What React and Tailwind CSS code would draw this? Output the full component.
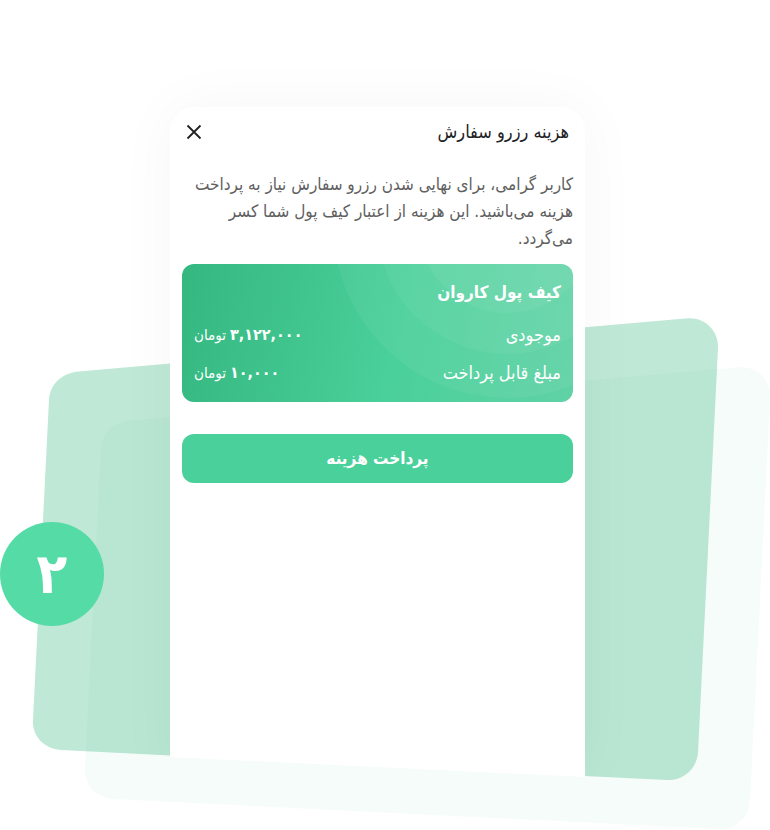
const amounts = [
  { label: 'موجودی', value: '۳,۱۲۲,۰۰۰' },
  { label: 'مبلغ قابل پرداخت', value: '۱۰,۰۰۰' },
];

const slab =
  'M79 371.6 L688 318.2 C705 317 719 331 718 348 L698 752 C697 769 683 781 667 780 L61 750 C44 749 32 736 33 720 L49 400 C50 384 62 373 79 371.6Z';

function Backdrop() {
  return (
    <svg className="absolute top-0 left-0 w-full" viewBox="0 0 770 830" aria-hidden="true">
      <path d={slab} fill="#bfe8d6" />
      <path d={slab} fill="#37c39b" fillOpacity="0.05" transform="translate(52 49)" />
    </svg>
  );
}

function WalletCard() {
  return (
    <section className="relative overflow-hidden rounded-xl bg-linear-[100deg] from-[#35b780] via-[#4ad09a] via-55% to-[#60d2a6] px-3 pt-3 pb-2.5 text-white">
      <svg className="absolute top-0 right-0 h-[138px] w-[391px]" viewBox="0 0 391 138" fill="#ffffff" fillOpacity="0.05" aria-hidden="true">
        <circle cx="325" cy="-40" r="174" />
        <circle cx="325" cy="-40" r="130" />
        <circle cx="325" cy="-40" r="89" />
      </svg>
      <div className="relative">
        <h2 className="text-[17px] leading-8 font-bold">کیف پول کاروان</h2>
        <dl className="flex flex-col pt-2">
          {amounts.map((row) => (
            <div key={row.label} className="flex h-[38px] items-center justify-between">
              <dt className="text-lg">{row.label}</dt>
              <dd className="flex items-baseline gap-1">
                <span className="text-base font-bold">{row.value}</span>
                <span className="text-[15px]">تومان</span>
              </dd>
            </div>
          ))}
        </dl>
      </div>
    </section>
  );
}

export default function App() {
  return (
    <main className="overflow-hidden bg-white font-['DejaVu_Sans_Condensed','DejaVu_Sans',sans-serif]">
      <div className="relative mx-auto w-full max-w-[770px] pt-[107px] pr-[185px] pb-[53px] pl-[170px]">
        <Backdrop />
        <div className="relative [clip-path:polygon(-100px_-100px,calc(100%+100px)_-100px,calc(100%+100px)_100%,100%_100%,0_calc(100%-20px),-100px_calc(100%-25px))]">
          <article dir="rtl" className="min-h-[670px] rounded-t-3xl bg-white px-3 shadow-[0_0_60px_rgba(0,0,0,0.04)]">
            <header className="flex h-[50px] items-center justify-between pr-1">
              <h1 className="text-lg text-[#202124]">هزینه رزرو سفارش</h1>
              <button type="button" aria-label="بستن" className="flex size-6 items-center justify-center text-[#202124]">
                <svg className="size-4" viewBox="0 0 16 16" fill="none" stroke="currentColor" strokeWidth="1.8" aria-hidden="true">
                  <path d="M1.5 1.5 L14.5 14.5 M14.5 1.5 L1.5 14.5" />
                </svg>
              </button>
            </header>
            <p className="pt-3.5 pb-3 text-[17px] leading-[27px] text-[#606060]">
              کاربر گرامی، برای نهایی شدن رزرو سفارش نیاز به پرداخت هزینه می‌باشید. این هزینه از اعتبار کیف پول شما کسر می‌گردد.
            </p>
            <WalletCard />
            <button type="button" className="mt-8 h-[49px] w-full rounded-xl bg-[#4ad09a] text-[17px] font-bold text-white">
              پرداخت هزینه
            </button>
          </article>
        </div>
        <div className="absolute top-[522px] left-0 flex size-[104px] items-center justify-center rounded-full bg-[#55dba5] text-[56px] leading-none font-bold text-white">
          ۲
        </div>
      </div>
    </main>
  );
}
